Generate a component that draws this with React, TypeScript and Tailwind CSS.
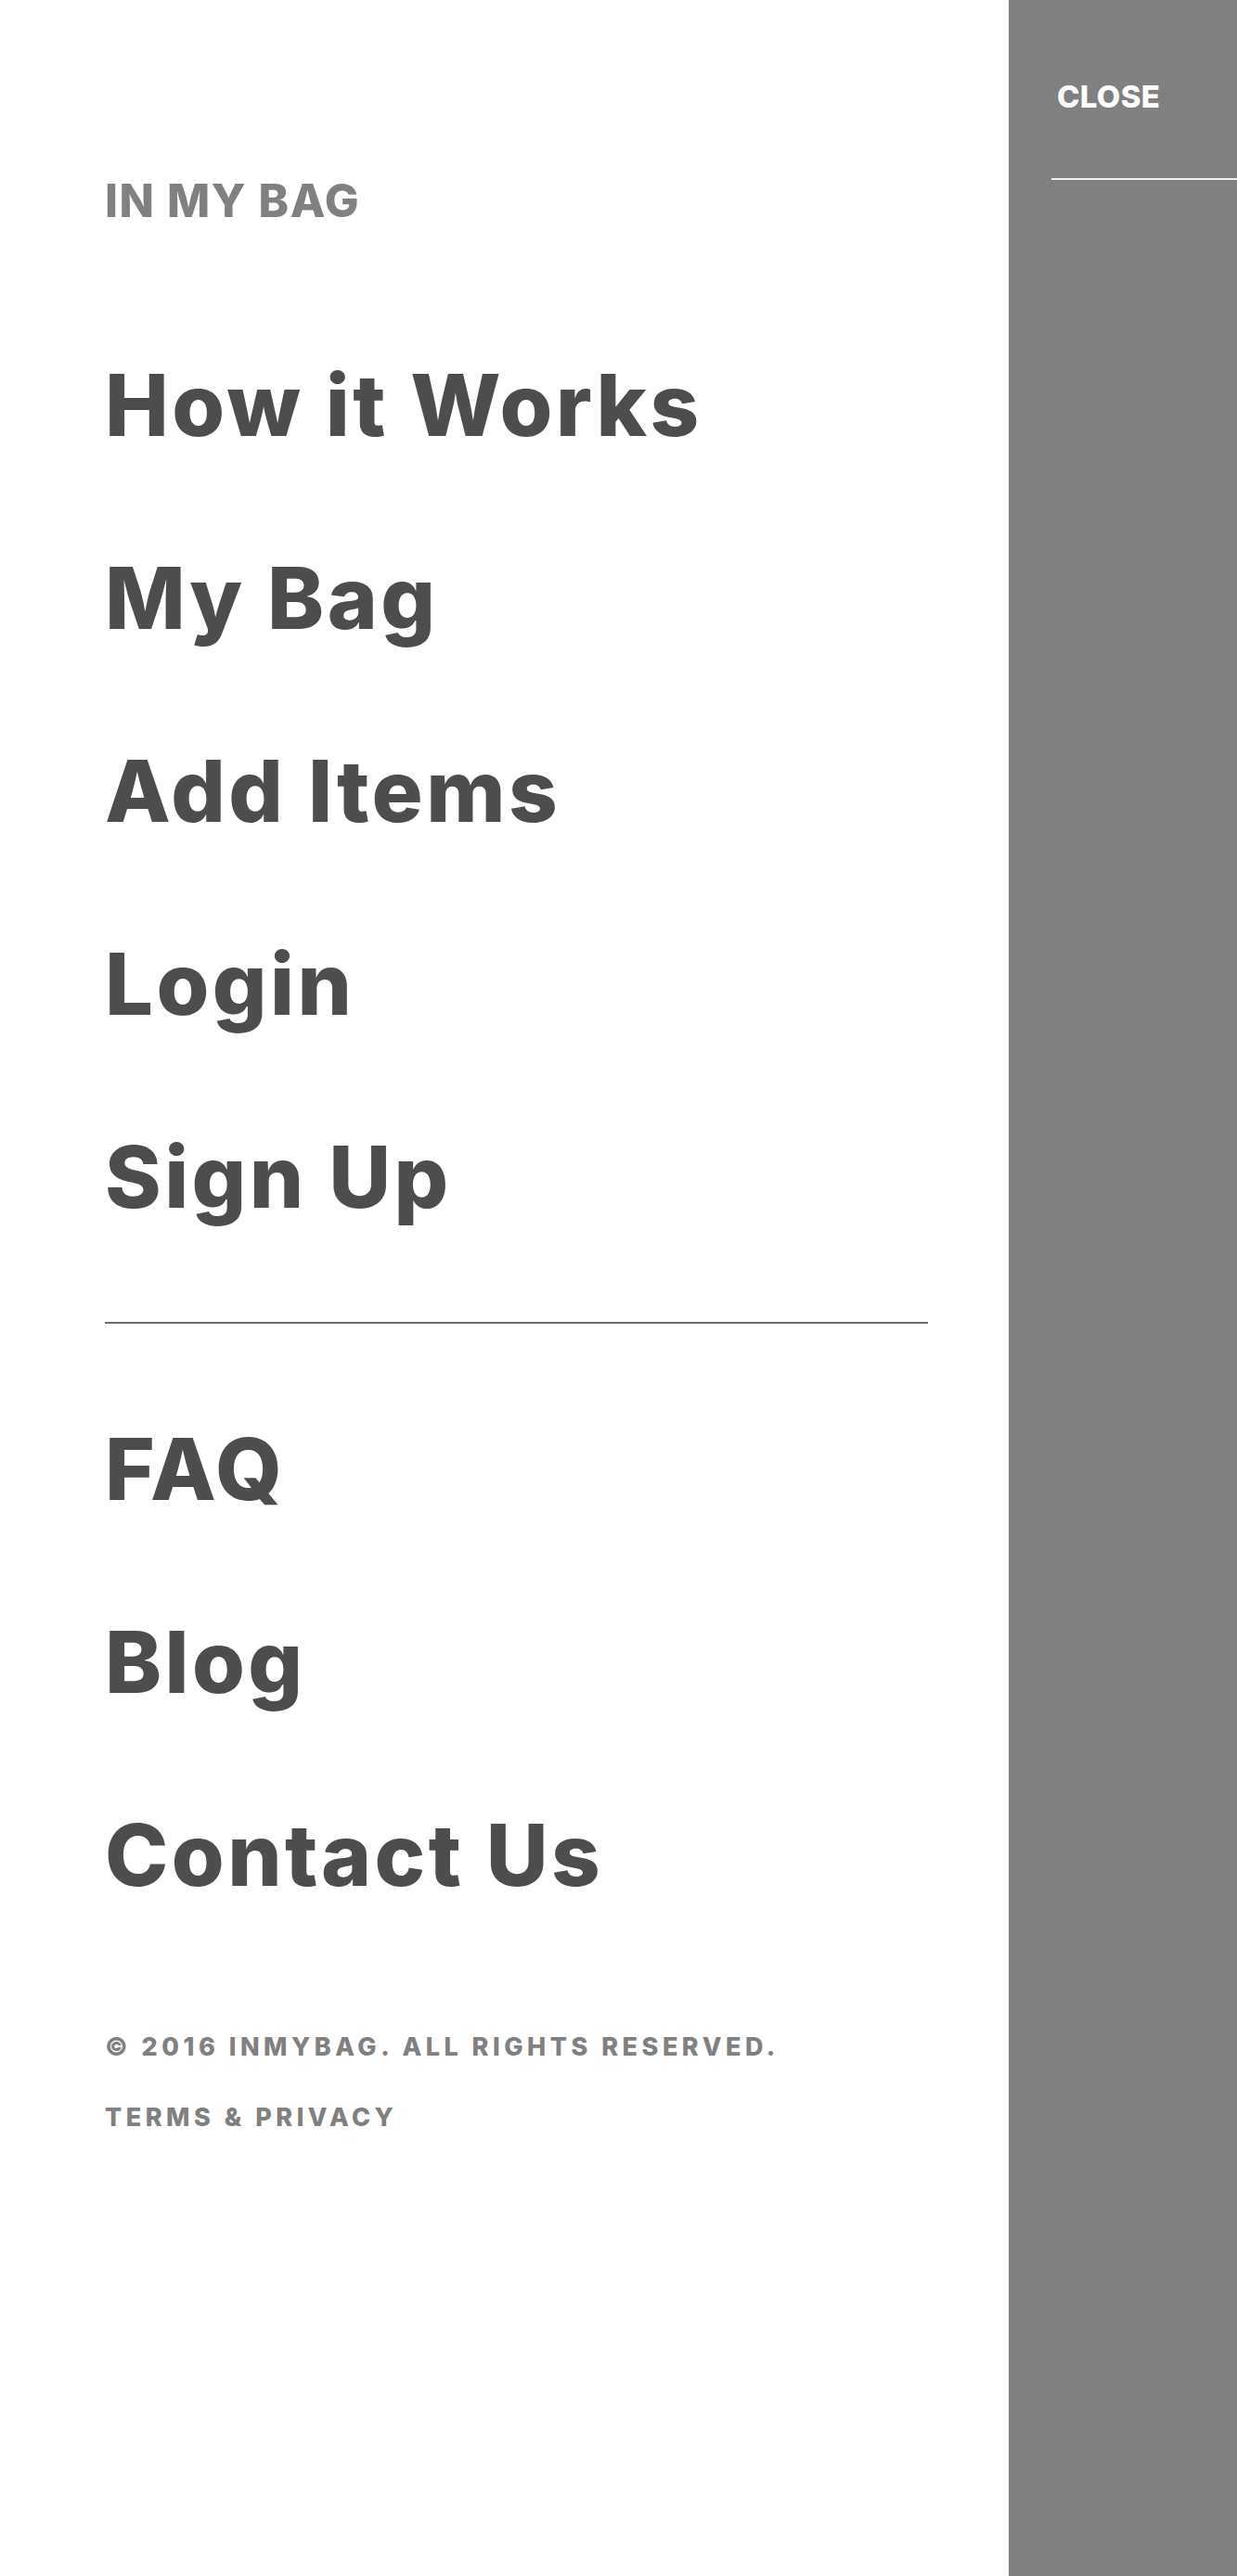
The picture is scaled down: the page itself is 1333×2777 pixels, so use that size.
import type { FunctionComponent } from 'react';

const mainLinks = ['How it Works', 'My Bag', 'Add Items', 'Login', 'Sign Up'];
const moreLinks = ['FAQ', 'Blog', 'Contact Us'];

const NavLink: FunctionComponent<{ label: string }> = ({ label }) => {
    return (
        <a
            href="#"
            className="block h-[208px] text-[92px] leading-[208px] font-extrabold tracking-[3.4px] text-[#4d4d4d] whitespace-nowrap"
        >
            {label}
        </a>
    );
};

const App: FunctionComponent = () => {
    return (
        <div className="flex min-h-[2777px] w-full bg-white font-['Inter','Noto_Sans',sans-serif]">
            <div className="flex-1 pl-[113px] pr-[87px] pt-[192px]">
                <p className="text-[49px] leading-none font-extrabold tracking-[1.6px] text-[#808080] uppercase">
                    In My Bag
                </p>
                <nav className="mt-[92px]">
                    {mainLinks.map((label) => (
                        <NavLink key={label} label={label}/>
                    ))}
                </nav>
                <hr className="mt-[52px] h-[2px] border-0 bg-[#6b6b6b]"/>
                <nav className="mt-[53px]">
                    {moreLinks.map((label) => (
                        <NavLink key={label} label={label}/>
                    ))}
                </nav>
                <p className="mt-[89px] text-[27px] leading-none font-extrabold tracking-[4.5px] text-[#808080] uppercase whitespace-nowrap">
                    © 2016 InMyBag. All rights reserved.
                </p>
                <a href="#" className="block mt-[49px] text-[27px] leading-none font-extrabold tracking-[4.5px] text-[#808080] uppercase">
                    Terms &amp; Privacy
                </a>
            </div>
            <aside className="w-[246px] shrink-0 bg-[#808080] pt-[88px]">
                <button className="ml-[52px] text-[33px] leading-none font-extrabold tracking-[0.3px] text-white uppercase">
                    Close
                </button>
                <div className="mt-[70px] ml-[46px] h-[2px] bg-[#eeeeee]"/>
            </aside>
        </div>
    );
};

export default App;
